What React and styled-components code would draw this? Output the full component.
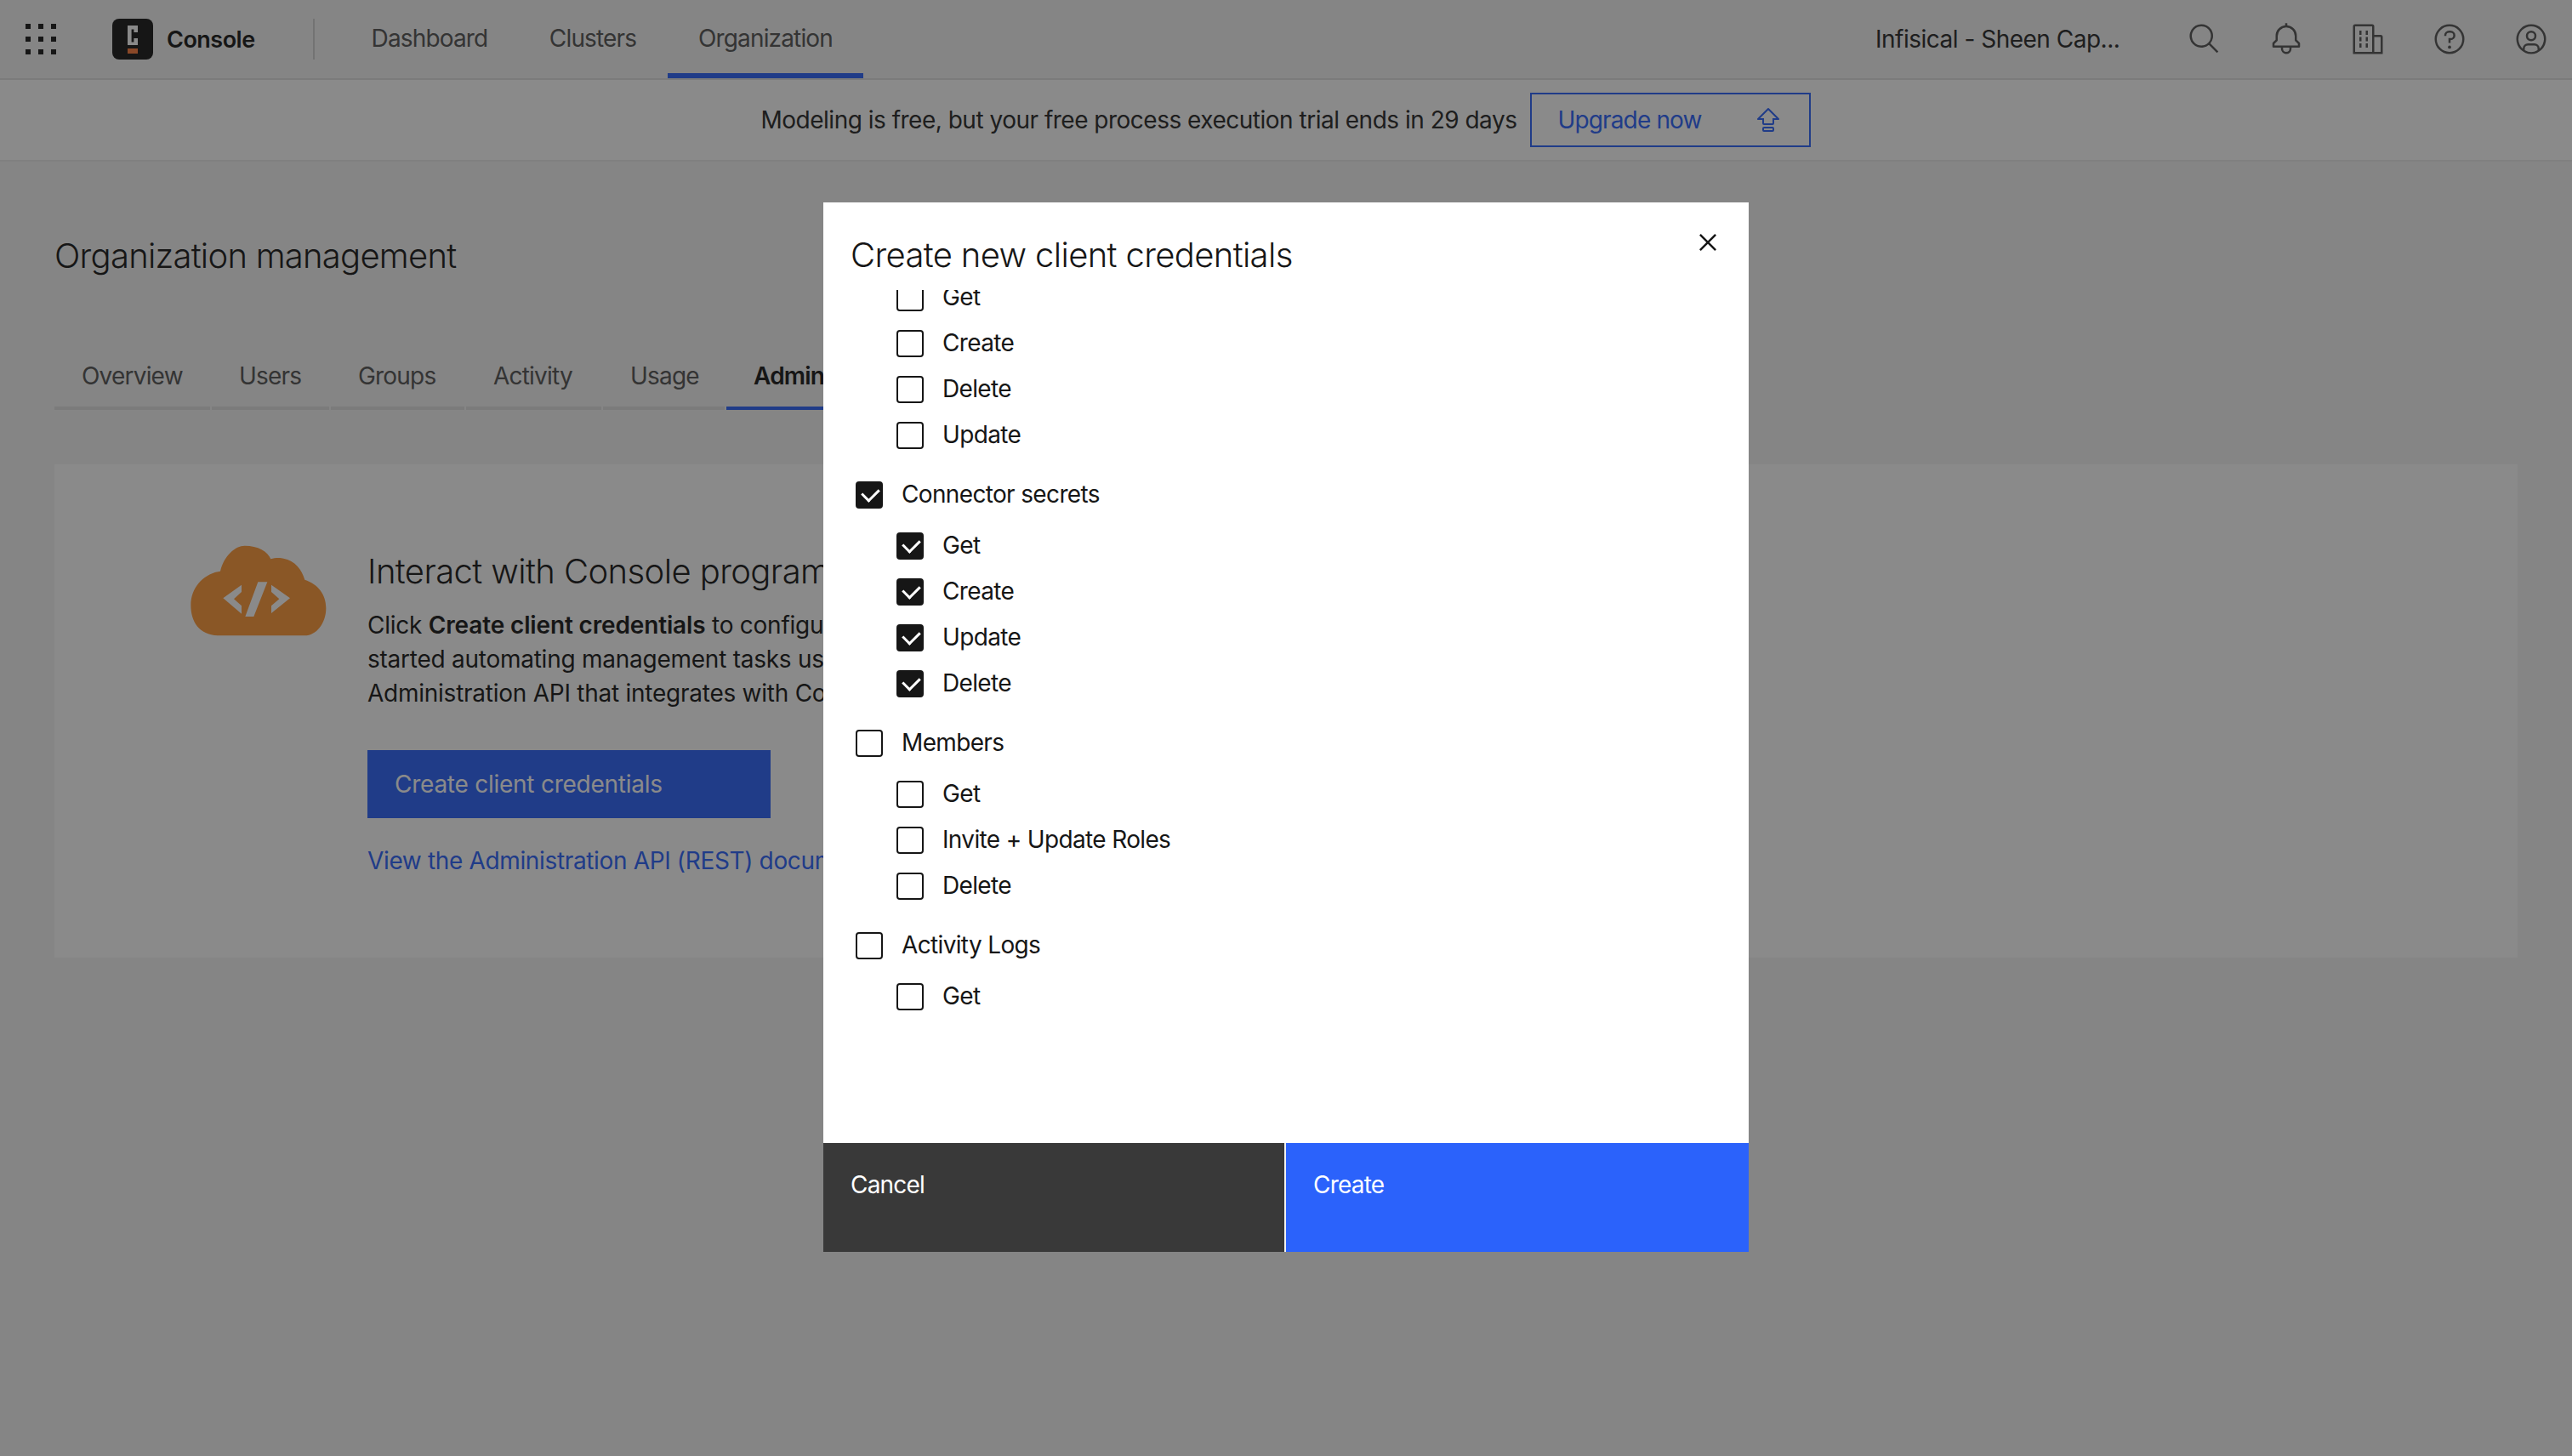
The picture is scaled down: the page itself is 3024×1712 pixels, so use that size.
import React from "react";
import styled, { createGlobalStyle } from "styled-components";

const Global = createGlobalStyle`
  html, body { margin: 0; padding: 0; background: #f4f4f4; }
  body { font-family: "Inter", "Noto Sans", sans-serif; font-size: 28px; color: #161616; letter-spacing: -0.5px; }
  * { box-sizing: border-box; }
`;

const BLUE = "#2b62fb";

const Page = styled.div`width: 3024px; height: 1712px; overflow: hidden; display: flex; flex-direction: column;`;
const Header = styled.header`height: 94px; flex: none; display: flex; align-items: stretch; background: #f4f4f4; border-bottom: 2px solid #e0e0e0;`;
const Switcher = styled.div`width: 108px; display: flex; align-items: center; padding-left: 24px;`;
const Brand = styled.div`display: flex; align-items: center; gap: 16px; padding: 0 24px; width: 262px;`;
const LogoBox = styled.div`width: 48px; height: 48px; border-radius: 8px; background: #161616; flex: none;`;
const BrandName = styled.span`font-weight: 600; font-size: 27px;`;
const Divider = styled.div`width: 2px; height: 48px; align-self: center; background: #d0d0d0; margin-left: -2px;`;
const Nav = styled.nav`display: flex; margin-left: 31px;`;
const NavItem = styled.a`
  display: flex; align-items: center; justify-content: center; width: ${p => p.$w}px; margin-bottom: -2px; color: #525252; padding-bottom: 2px;
  border-bottom: 6px solid ${p => (p.$active ? BLUE : "transparent")};
  height: 92px; padding-top: 6px; letter-spacing: -0.85px;
`;
const HeaderRight = styled.div`margin-left: auto; display: flex; align-items: center; padding-right: 28px;`;
const OrgName = styled.span`margin-right: 81px; color: #262626; width: 286px; white-space: nowrap;`;
const IconRow = styled.div`display: flex; gap: 56px; color: #525252;`;
const IconSvg = styled.svg`width: ${p => p.$s || 40}px; height: ${p => p.$s || 40}px; display: block; fill: currentColor; flex: none;`;

const Banner = styled.div`height: 96px; flex: none; background: #fff; border-bottom: 2px solid #eaeaea; display: flex; align-items: center; justify-content: center;`;
const BannerText = styled.span`color: #262626; margin-right: 16px;`;
const Upgrade = styled.a`
  width: 330px; height: 64px; border: 2px solid ${BLUE}; color: ${BLUE}; display: flex; align-items: center; justify-content: space-between;
  padding: 0 32px 0 30px; letter-spacing: -0.85px;
`;

const Main = styled.main`flex: 1; padding: 83px 64px 0;`;
const PageTitle = styled.h1`margin: 0; font-weight: 300; font-size: 40px; line-height: 56px; letter-spacing: -0.75px;`;
const Tabs = styled.div`display: flex; gap: 2px; margin-top: 73px; height: 80px; width: 1000px;`;
const Tab = styled.div`
  width: ${p => p.$w}px; flex: none; padding: 4px 32px 0; display: flex; align-items: center; white-space: nowrap; overflow: hidden;
  border-bottom: 4px solid ${p => (p.$active ? BLUE : "#e0e0e0")}; color: ${p => (p.$active ? "#161616" : "#525252")};
  font-weight: ${p => (p.$active ? 600 : 400)}; letter-spacing: -0.8px;
`;
const Card = styled.section`margin-top: 64px; height: 580px; background: #fff; padding: 89px 0 0 151px; display: flex;`;
const Cloud = styled.svg`width: 180px; height: 120px; flex: none; margin-right: 37px;`;
const CardBody = styled.div`padding-top: 9px; white-space: nowrap;`;
const CardTitle = styled.h2`margin: 0; font-weight: 300; font-size: 40px; line-height: 56px; letter-spacing: -0.6px;`;
const Para = styled.p`margin: 15px 0 0; line-height: 40px; letter-spacing: -0.25px;`;
const Strong = styled.strong`font-weight: 600; letter-spacing: -0.15px;`;
const PrimaryBtn = styled.a`display: flex; align-items: center; width: 474px; height: 80px; margin-top: 47px; padding-left: 32px; background: ${BLUE}; color: #fff; letter-spacing: -0.25px;`;
const DocLink = styled.a`display: block; margin-top: 30px; line-height: 40px; color: ${BLUE}; letter-spacing: -0.35px;`;

const Overlay = styled.div`position: fixed; inset: 0; background: rgba(22, 22, 22, 0.5); display: flex; justify-content: center; padding-top: 238px;`;
const Modal = styled.div`position: relative; width: 1088px; height: 1234px; background: #fff; display: flex; flex-direction: column;`;
const ModalHead = styled.div`height: 103px; flex: none; padding: 34px 32px 0;`;
const ModalTitle = styled.h2`margin: 0; font-weight: 300; font-size: 40px; line-height: 56px; letter-spacing: -0.65px;`;
const Close = styled.button`position: absolute; top: 27px; right: 28px; width: 40px; height: 40px; padding: 0; border: 0; background: none; color: #161616;`;
const ModalBody = styled.div`flex: 1; overflow: hidden; padding-left: 38px;`;
const Perms = styled.div`margin-top: -7px; display: flex; flex-direction: column; gap: 38px;`;
const Section = styled.div`display: flex; flex-direction: column; gap: 28px;`;
const Children = styled.div`display: flex; flex-direction: column; gap: 22px; padding-left: 48px;`;
const Row = styled.label`display: flex; align-items: center; height: 32px; gap: 22px;`;
const Box = styled.span`
  position: relative; width: 32px; height: 32px; flex: none; border-radius: 4px; border: 2px solid #161616;
  background: ${p => (p.$on ? "#161616" : "#fff")};
  &::before {
    content: ""; display: ${p => (p.$on ? "block" : "none")}; position: absolute; left: 6px; top: 5px; width: 16px; height: 10px;
    border-left: 3px solid #fff; border-bottom: 3px solid #fff; transform: rotate(-45deg);
  }
`;
const RowLabel = styled.span`line-height: 36px; padding-bottom: 2px; color: #161616; letter-spacing: -0.65px;`;
const ModalFoot = styled.div`height: 128px; flex: none; display: flex;`;
const FootBtn = styled.button`
  width: ${p => (p.$primary ? 546 : 542)}px; flex: none; border: 0; margin: 0; padding: 31px 32px 0; text-align: left; display: flex; align-items: flex-start; font: inherit; letter-spacing: -0.8px; line-height: 36px; color: #fff;
  background: ${p => (p.$primary ? BLUE : "#393939")};
  border-left: ${p => (p.$primary ? "2px solid #f0f0f0" : "0")};
`;

const Logo = () => (
  <LogoBox>
    <IconSvg viewBox="0 0 48 48" $s={48}>
      <path d="M18 8h12v8h-4.6v-3.4h-2.8v14.8h2.8V23H30v8H18z" fill="#fff" />
      <rect x="18" y="35" width="12" height="6" fill="#ff7a3a" />
    </IconSvg>
  </LogoBox>
);

const P = ({ d, s, children }) => (
  <IconSvg viewBox="0 0 32 32" $s={s}>
    {d && <path d={d} />}
    {children}
  </IconSvg>
);

const SwitcherIcon = () => (
  <IconSvg viewBox="0 0 32 32" $s={48} fill="#525252">
    {[4, 14, 24].flatMap(y => [4, 14, 24].map(x => <rect key={`${x}-${y}`} x={x} y={y} width="4" height="4" />))}
  </IconSvg>
);

const perms = [
  { kids: [["Get"], ["Create"], ["Delete"], ["Update"]] },
  { name: "Connector secrets", on: true, kids: [["Get"], ["Create"], ["Update"], ["Delete"]] },
  { name: "Members", kids: [["Get"], ["Invite + Update Roles"], ["Delete"]] },
  { name: "Activity Logs", kids: [["Get"]] },
];

const tabs = [["Overview", 183], ["Users", 138], ["Groups", 157], ["Activity", 159], ["Usage", 143], ["Administration API", 400, true]];

export default function App() {
  return (
    <Page>
      <Global />
      <Header>
        <Switcher><SwitcherIcon /></Switcher>
        <Brand><Logo /><BrandName>Console</BrandName></Brand>
        <Divider />
        <Nav>
          <NavItem $w={208}>Dashboard</NavItem>
          <NavItem $w={176}>Clusters</NavItem>
          <NavItem $w={230} $active>Organization</NavItem>
        </Nav>
        <HeaderRight>
          <OrgName>Infisical - Sheen Cap...</OrgName>
          <IconRow>
            <P d="M29,27.5859l-7.5521-7.5521a11.0177,11.0177,0,1,0-1.4141,1.4141L27.5859,29ZM4,13a9,9,0,1,1,9,9A9.01,9.01,0,0,1,4,13Z" />
            <P d="M28.7071,19.293,26,16.5859V13a10.0136,10.0136,0,0,0-9-9.9492V1H15V3.0508A10.0136,10.0136,0,0,0,6,13v3.5859L3.2929,19.293A1,1,0,0,0,3,20v3a1,1,0,0,0,1,1h7v.7768a5.152,5.152,0,0,0,4.5,5.1987A5.0057,5.0057,0,0,0,21,25V24h7a1,1,0,0,0,1-1V20A1,1,0,0,0,28.7071,19.293ZM19,25a3,3,0,0,1-6,0V24h6Zm8-3H5V20.4141L7.707,17.707A1,1,0,0,0,8,17V13a8,8,0,0,1,16,0v4a1,1,0,0,0,.293.707L27,20.4141Z" />
            <P d="M8 8H10V12H8zM8 14H10V18H8zM14 8H16V12H14zM14 14H16V18H14zM8 20H10V24H8zM14 20H16V24H14zM30,14a2,2,0,0,0-2-2H22V4a2,2,0,0,0-2-2H4A2,2,0,0,0,2,4V30H30ZM4,4H20V28H4ZM22,28V14h6V28Z" />
            <P d="M16,2A14,14,0,1,0,30,16,14,14,0,0,0,16,2Zm0,26A12,12,0,1,1,28,16,12,12,0,0,1,16,28ZM17,8H15.5A4.49,4.49,0,0,0,11,12.5V13h2v-.5A2.5,2.5,0,0,1,15.5,10H17a2.5,2.5,0,0,1,0,5H15v4.5h2V17a4.5,4.5,0,0,0,0-9Z">
              <circle cx="16" cy="23.5" r="1.5" />
            </P>
            <P d="M16,8a5,5,0,1,0,5,5A5,5,0,0,0,16,8Zm0,8a3,3,0,1,1,3-3A3.0034,3.0034,0,0,1,16,16ZM16,2A14,14,0,1,0,30,16,14.0158,14.0158,0,0,0,16,2ZM10,26.3765V25a3.0033,3.0033,0,0,1,3-3h6a3.0033,3.0033,0,0,1,3,3v1.3765a11.8989,11.8989,0,0,1-12,0Zm13.9925-1.4507A5.0016,5.0016,0,0,0,19,20H13a5.0016,5.0016,0,0,0-4.9925,4.9258,12,12,0,1,1,15.985,0Z" />
          </IconRow>
        </HeaderRight>
      </Header>
      <Banner>
        <BannerText>Modeling is free, but your free process execution trial ends in 29 days</BannerText>
        <Upgrade>
          Upgrade now
          <P s={32} d="M21,24H11a2,2,0,0,0-2,2v2a2,2,0,0,0,2,2H21a2,2,0,0,0,2-2V26A2,2,0,0,0,21,24Zm0,4H11V26H21ZM28.707,14.293l-12-12a.9994.9994,0,0,0-1.414,0l-12,12A1,1,0,0,0,4,16H9v4a2.0023,2.0023,0,0,0,2,2H21a2.0025,2.0025,0,0,0,2-2V16h5a1,1,0,0,0,.707-1.707ZM21,14v6H11V14H6.4141L16,4.4141,25.5859,14Z" />
        </Upgrade>
      </Banner>
      <Main>
        <PageTitle>Organization management</PageTitle>
        <Tabs>
          {tabs.map(([t, w, a]) => <Tab key={t} $w={w} $active={a}>{t}</Tab>)}
        </Tabs>
        <Card>
          <Cloud viewBox="0 0 540 360">
            <path fill="#fe9836" d="M130 337C60 337 28 290 28 230C28 165 75 118 132 110C145 55 185 20 218 20C265 20 300 40 310 67C325 62 345 62 355 65C395 72 420 105 430 140C475 155 505 190 505 240C505 295 470 337 430 337Z" />
            <path fill="#fff" d="M207 158L142 205L207 260V232L180 208L207 183ZM265 148H298L250 270H220ZM312 158L378 205L312 258V232L340 208L312 183Z" />
          </Cloud>
          <CardBody>
            <CardTitle>Interact with Console programmatically</CardTitle>
            <Para>
              Click <Strong>Create client credentials</Strong> to configure API access<br />
              started automating management tasks using the<br />
              Administration API that integrates with Console.
            </Para>
            <PrimaryBtn>Create client credentials</PrimaryBtn>
            <DocLink>View the Administration API (REST) documentation</DocLink>
          </CardBody>
        </Card>
      </Main>
      <Overlay>
        <Modal>
          <ModalHead><ModalTitle>Create new client credentials</ModalTitle></ModalHead>
          <Close aria-label="Close">
            <P d="M17.4141 16L24 9.4141 22.5859 8 16 14.5859 9.4143 8 8 9.4141 14.5859 16 8 22.5859 9.4143 24 16 17.4141 22.5859 24 24 22.5859 17.4141 16z" />
          </Close>
          <ModalBody>
            <Perms>
              {perms.map((s, i) => (
                <Section key={i}>
                  {s.name && <Row><Box $on={s.on} /><RowLabel>{s.name}</RowLabel></Row>}
                  <Children>
                    {s.kids.map(([k]) => <Row key={k}><Box $on={s.on} /><RowLabel>{k}</RowLabel></Row>)}
                  </Children>
                </Section>
              ))}
            </Perms>
          </ModalBody>
          <ModalFoot>
            <FootBtn>Cancel</FootBtn>
            <FootBtn $primary>Create</FootBtn>
          </ModalFoot>
        </Modal>
      </Overlay>
    </Page>
  );
}
